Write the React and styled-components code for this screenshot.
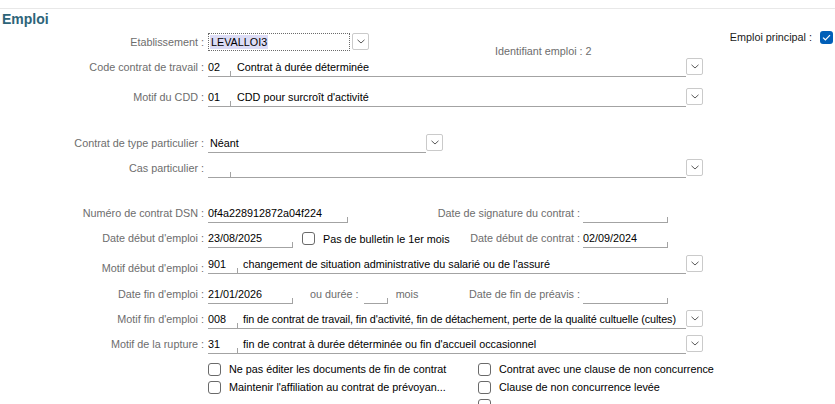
import React from 'react';
import styled, { createGlobalStyle } from 'styled-components';

const GlobalStyle = createGlobalStyle`
  body {
    margin: 0;
    background: #ffffff;
    font-family: "Liberation Sans", Arial, sans-serif;
    font-size: 10.8px;
  }
`;

const Page = styled.div`
  width: 835px;
  height: 404px;
  overflow: hidden;
  background: #ffffff;
`;

const TopStrip = styled.div`
  height: 8px;
  border-bottom: 1px solid #e8e8e8;
`;

const Title = styled.h1`
  margin: 0;
  height: 21px;
  padding: 1px 0 0 2px;
  box-sizing: border-box;
  line-height: 18px;
  font-size: 14px;
  font-weight: bold;
  color: #2d6479;
`;

const Row = styled.div`
  display: flex;
  align-items: flex-start;
  height: ${(p) => p.$h || 25}px;
  margin-top: ${(p) => p.$top || 0}px;
`;

const Label = styled.div`
  width: 204px;
  flex: none;
  text-align: right;
  color: #6d6d6d;
  line-height: 25px;
  padding-top: ${(p) => p.$drop || 0}px;
  white-space: nowrap;
`;

const Fields = styled.div`
  display: flex;
  align-items: flex-start;
  margin-left: 4px;
  width: ${(p) => p.$w || 495}px;
  flex: none;
  height: 100%;
`;

const Field = styled.div`
  position: relative;
  box-sizing: border-box;
  height: 22px;
  padding-top: 3px;
  padding-left: ${(p) => p.$pl || 0}px;
  line-height: 19px;
  width: ${(p) => (p.$w ? `${p.$w}px` : 'auto')};
  flex: ${(p) => (p.$w ? 'none' : '1')};
  margin-left: ${(p) => p.$ml || 0}px;
  border-bottom: 1px solid #a3a3a3;
  color: #000000;
  letter-spacing: ${(p) => (p.$tight ? '-0.09px' : 'normal')};
  white-space: nowrap;
  overflow: visible;
  &::after {
    content: '';
    display: ${(p) => (p.$tick ? 'block' : 'none')};
    position: absolute;
    right: 0;
    bottom: 0;
    width: 1px;
    height: 5px;
    background: #a3a3a3;
  }
`;

const Combo = styled.div`
  margin-top: 3px;
  width: 142px;
  height: 18px;
  box-sizing: border-box;
  border: 1px dotted #6b6b6b;
  padding: 1px 1px;
  line-height: 14px;
`;

const Selected = styled.span`
  display: inline-block;
  background: #dcdcf6;
  color: #000000;
  padding: 0 1px;
`;

const DropBtn = styled.div`
  flex: none;
  margin-top: 3px;
  margin-left: ${(p) => p.$ml || 0}px;
  width: 17px;
  height: 17px;
  box-sizing: border-box;
  border: 1px solid #cacaca;
  border-radius: 2px;
  background: #ffffff;
  display: flex;
  align-items: center;
  justify-content: center;
`;

const Muted = styled.span`
  color: #6d6d6d;
  line-height: 25px;
  margin-left: ${(p) => p.$ml || 0}px;
  white-space: nowrap;
`;

const RightPair = styled.div`
  display: flex;
  align-items: flex-start;
  margin-left: auto;
`;

const CheckItem = styled.label`
  display: flex;
  flex: none;
  align-items: center;
  gap: 8px;
  width: ${(p) => (p.$w ? `${p.$w}px` : 'auto')};
  margin-left: ${(p) => p.$ml || 0}px;
  height: ${(p) => p.$h || 18}px;
  color: #000000;
  white-space: nowrap;
`;

const Box = styled.span`
  flex: none;
  width: 13px;
  height: 13px;
  box-sizing: border-box;
  border: 1px solid #6a6a6a;
  border-radius: 3px;
  background: #ffffff;
`;

const BlueBox = styled.span`
  flex: none;
  width: 13px;
  height: 13px;
  border-radius: 3px;
  background: #005fb8;
  display: flex;
  align-items: center;
  justify-content: center;
`;

const TopRight = styled.div`
  display: flex;
  align-items: center;
  gap: 8px;
  margin-left: auto;
  margin-right: 2px;
  line-height: 14px;
  color: #1a1a1a;
`;

const Ident = styled.div`
  align-self: flex-end;
  margin-left: 126px;
  margin-bottom: -3px;
  color: #6d6d6d;
  line-height: 14px;
  white-space: nowrap;
`;

const Chevron = () => (
  <svg width="8" height="5" viewBox="0 0 8 5">
    <path d="M0.5 0.8 L4 4 L7.5 0.8" fill="none" stroke="#5a5a5a" strokeWidth="1" />
  </svg>
);

const Drop = ({ ml }) => (
  <DropBtn $ml={ml}>
    <Chevron />
  </DropBtn>
);

function CodeRow({ label, code, desc, wide, top, drop, tight }) {
  return (
    <Row $top={top}>
      <Label $drop={drop}>{label}</Label>
      <Fields>
        <Field $w={wide ? 30 : 23} $tick>{code}</Field>
        <Field $pl={wide ? 5 : 6} $tight={tight}>{desc}</Field>
        <Drop />
      </Fields>
    </Row>
  );
}

export default function App() {
  return (
    <Page>
      <GlobalStyle />
      <TopStrip />
      <Title>Emploi</Title>

      <Row>
        <Label>Etablissement :</Label>
        <Fields $w={627}>
          <Combo>
            <Selected>LEVALLOI3</Selected>
          </Combo>
          <Drop ml={2} />
          <Ident>Identifiant emploi : 2</Ident>
          <TopRight>
            Emploi principal :
            <BlueBox>
              <svg width="9" height="7" viewBox="0 0 9 7">
                <path d="M1 3.6 L3.4 5.8 L8 1.2" fill="none" stroke="#ffffff" strokeWidth="1.2" />
              </svg>
            </BlueBox>
          </TopRight>
        </Fields>
      </Row>

      <CodeRow label="Code contrat de travail :" code="02" desc="Contrat à durée déterminée" />
      <CodeRow label="Motif du CDD :" code="01" desc="CDD pour surcroît d'activité" top={5} />

      <Row $top={21}>
        <Label>Contrat de type particulier :</Label>
        <Fields>
          <Field $w={218} $pl={2}>Néant</Field>
          <Drop />
        </Fields>
      </Row>

      <CodeRow label="Cas particulier :" code="" desc="" />

      <Row $top={20}>
        <Label>Numéro de contrat DSN :</Label>
        <Fields $w={460}>
          <Field $w={140} $tick>0f4a228912872a04f224</Field>
          <RightPair>
            <Muted>Date de signature du contrat :</Muted>
            <Field $w={85} $ml={3} $tick />
          </RightPair>
        </Fields>
      </Row>

      <Row>
        <Label>Date début d'emploi :</Label>
        <Fields $w={460}>
          <Field $w={85} $tick>23/08/2025</Field>
          <CheckItem $ml={9} $h={25}>
            <Box />
            Pas de bulletin le 1er mois
          </CheckItem>
          <RightPair>
            <Muted>Date début de contrat :</Muted>
            <Field $w={85} $ml={3} $tick>02/09/2024</Field>
          </RightPair>
        </Fields>
      </Row>

      <CodeRow
        label="Motif début d'emploi :"
        code="901"
        desc="changement de situation administrative du salarié ou de l'assuré"
        wide
        top={1}
        drop={4}
      />

      <Row $top={5}>
        <Label>Date fin d'emploi :</Label>
        <Fields $w={460}>
          <Field $w={85} $tick>21/01/2026</Field>
          <Muted $ml={17}>ou durée :</Muted>
          <Field $w={24} $ml={5} $tick />
          <Muted $ml={8}>mois</Muted>
          <RightPair>
            <Muted>Date de fin de préavis :</Muted>
            <Field $w={85} $ml={3} $tick />
          </RightPair>
        </Fields>
      </Row>

      <CodeRow
        label="Motif fin d'emploi :"
        code="008"
        desc="fin de contrat de travail, fin d'activité, fin de détachement, perte de la qualité cultuelle (cultes)"
        wide
        tight
      />
      <CodeRow
        label="Motif de la rupture :"
        code="31"
        desc="fin de contrat à durée déterminée ou fin d'accueil occasionnel"
        wide
      />

      <Row $h={18} $top={3}>
        <Label />
        <Fields>
          <CheckItem $w={270}>
            <Box />
            Ne pas éditer les documents de fin de contrat
          </CheckItem>
          <CheckItem>
            <Box />
            Contrat avec une clause de non concurrence
          </CheckItem>
        </Fields>
      </Row>
      <Row $h={18}>
        <Label />
        <Fields>
          <CheckItem $w={270}>
            <Box />
            Maintenir l'affiliation au contrat de prévoyan...
          </CheckItem>
          <CheckItem>
            <Box />
            Clause de non concurrence levée
          </CheckItem>
        </Fields>
      </Row>
      <Row $h={18}>
        <Label />
        <Fields>
          <CheckItem $w={270} />
          <CheckItem>
            <Box />
          </CheckItem>
        </Fields>
      </Row>
    </Page>
  );
}
